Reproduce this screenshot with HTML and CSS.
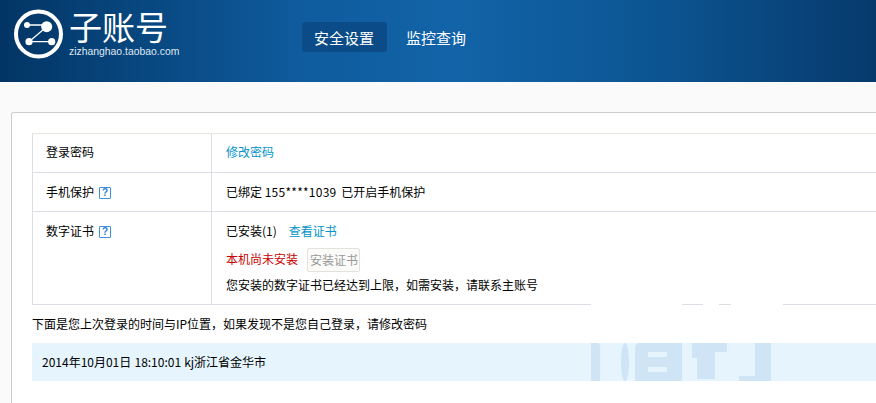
FILE: index.html
```html
<!DOCTYPE html>
<html lang="zh-CN">
<head>
<meta charset="utf-8">
<title>子账号</title>
<link rel="stylesheet" href="styles.css">
</head>
<body>
<header class="topbar">
  <a class="logo">
    <svg class="logo-mark" width="50" height="50" viewBox="0 0 50 50">
      <circle cx="25.5" cy="25" r="22.5" fill="none" stroke="#fff" stroke-width="4"/>
      <path d="M14 16H33M33.700 17.700 16 32.700M16 32.700H38.700" fill="none" stroke="#fff" stroke-width="1.300"/>
      <circle cx="14" cy="16" r="3" fill="#fff"/>
      <circle cx="33.700" cy="17.700" r="5.500" fill="#fff"/>
      <circle cx="16" cy="32.700" r="3.600" fill="#fff"/>
      <circle cx="38.700" cy="32.700" r="3.600" fill="#fff"/>
    </svg>
    <span class="logo-text">
      <span class="logo-title">子账号</span>
      <span class="logo-url">zizhanghao.taobao.com</span>
    </span>
  </a>
  <nav class="nav">
    <a class="nav-item active">安全设置</a>
    <a class="nav-item">监控查询</a>
  </nav>
</header>
<main class="page">
  <section class="card">
    <div class="rows">
      <div class="row row-first">
        <div class="label">登录密码</div>
        <div class="value"><a class="link">修改密码</a></div>
      </div>
      <div class="row row-second">
        <div class="label">手机保护<span class="help">?</span></div>
        <div class="value">已绑定 <span class="phone">155****1039</span> 已开启手机保护</div>
      </div>
      <div class="row row-tall">
        <div class="label">数字证书<span class="help">?</span></div>
        <div class="value value-stack">
          <div class="line">已安装(1)<a class="link link-gap">查看证书</a></div>
          <div class="line line-action"><span class="warn">本机尚未安装</span><span class="btn">安装证书</span></div>
          <div class="line line-limit">您安装的数字证书已经达到上限，如需安装，请联系主账号</div>
        </div>
      </div>
    </div>
    <p class="note">下面是您上次登录的时间与IP位置，如果发现不是您自己登录，请修改密码</p>
    <div class="login-info">2014年10月01日 18:10:01 kj浙江省金华市</div>
  </section>
  <div class="watermark" aria-hidden="true">
    <svg width="194" height="90" viewBox="0 0 194 90">
      <rect x="1" y="0" width="91" height="43" fill="#fff"/>
      <rect x="113" y="0" width="16" height="43" fill="#fff"/>
      <rect x="141" y="0" width="52" height="43" fill="#fff"/>
      <g fill="#cfe4f5">
        <path d="M1 43H7Q10 43 10 47V81H1Z"/>
        <ellipse cx="35" cy="62" rx="4" ry="19"/>
        <path d="M50 43H92V81H45V48Q45 43 50 43ZM58 52V57H77V52ZM58 67V72H77V67Z" fill-rule="evenodd"/>
        <path d="M102 43H137V52H125V79H107V58H102Z"/>
        <path d="M165 43H181V81H149V76H165Z"/>
      </g>
    </svg>
  </div>
</main>
</body>
</html>
```

FILE: styles.css
```css
* { box-sizing: border-box; }
html, body { margin: 0; padding: 0; height: 403px; overflow: hidden; }
body {
  width: 876px;
  background: #fafafa;
  color: #000;
  font: 12px/18px "Noto Sans CJK SC", "Liberation Sans", sans-serif;
}
a { text-decoration: none; }
.topbar {
  height: 82px;
  display: flex;
  background: linear-gradient(90deg, #023565 0%, #0f5c9e 35%, #1263a8 52%, #0c5592 75%, #063a6c 100%);
}
.logo { display: flex; width: 302px; padding: 9px 0 0 13px; align-items: flex-start; }
.logo-mark { flex: none; }
.logo-text { display: flex; flex-direction: column; margin-left: 6px; color: #fff; }
.logo-title { font-size: 33px; line-height: 32px; margin-top: 1px; }
.logo-url { font: 10.4px/14px "Liberation Sans", sans-serif; color: #dfe8f2; margin-top: 3px; }
.nav { display: flex; align-items: flex-start; padding-top: 22px; }
.nav-item { color: #fff; font-size: 15px; line-height: 31px; height: 30px; padding: 0 12px; margin-right: 7px; border-radius: 3px; }
.nav-item.active { background: #0b4c88; padding: 0 13px 0 12px; }
.page { position: relative; height: 321px; overflow: hidden; padding: 30px 0 0 11px; }
.card {
  width: 900px;
  height: 400px;
  background: #fff;
  border: 1px solid #ccc;
  border-radius: 2px 0 0 0;
  padding: 20px 0 0 20px;
}
.rows { border: 1px solid #dddde6; border-top-color: #e6e6dc; }
.row { display: flex; }
.row + .row { border-top: 1px solid #dddde6; }
.row-first { height: 38px; }
.row-second { height: 39px; }
.row-tall { height: 93px; }
.label { width: 179px; flex: none; padding: 9px 0 0 13px; border-right: 1px solid #dddde6; }
.row-second .label, .row-second .value, .row-tall .label, .row-tall .value { padding-top: 10px; }
.value { padding: 9px 0 0 14px; }
.value-stack { display: flex; flex-direction: column; }
.line { min-height: 18px; display: flex; align-items: center; }
.line-action { min-height: 24px; margin-top: 8px; }
.line-limit { margin-top: 4px; }
.phone { letter-spacing: .25px; margin-right: 2px; }
.link { color: #0593c8; }
.link-gap { margin-left: 12px; }
.warn { color: #c80000; margin-bottom: 2px; }
.btn {
  margin-left: 9px;
  padding: 0 1px 0 2px;
  height: 24px;
  line-height: 21px;
  border: 1px solid #e4e2da;
  border-radius: 2px;
  background: #fbfbf9;
  color: #999;
}
.help {
  display: inline-block;
  width: 12px;
  height: 12px;
  margin-left: 5px;
  border: 1px solid #3f8fdc;
  border-radius: 1px;
  color: #2b80d4;
  font: bold 10px/10px "Liberation Sans", sans-serif;
  text-align: center;
  vertical-align: 1px;
}
.note { margin: 10px 0 0 0; height: 18px; }
.login-info {
  margin-top: 10px;
  height: 38px;
  line-height: 37px;
  padding-left: 10px;
  background: #e5f4fd;
  word-spacing: .5px;
}
.watermark { position: absolute; left: 590px; top: 218px; width: 194px; height: 90px; line-height: 0; }
```
